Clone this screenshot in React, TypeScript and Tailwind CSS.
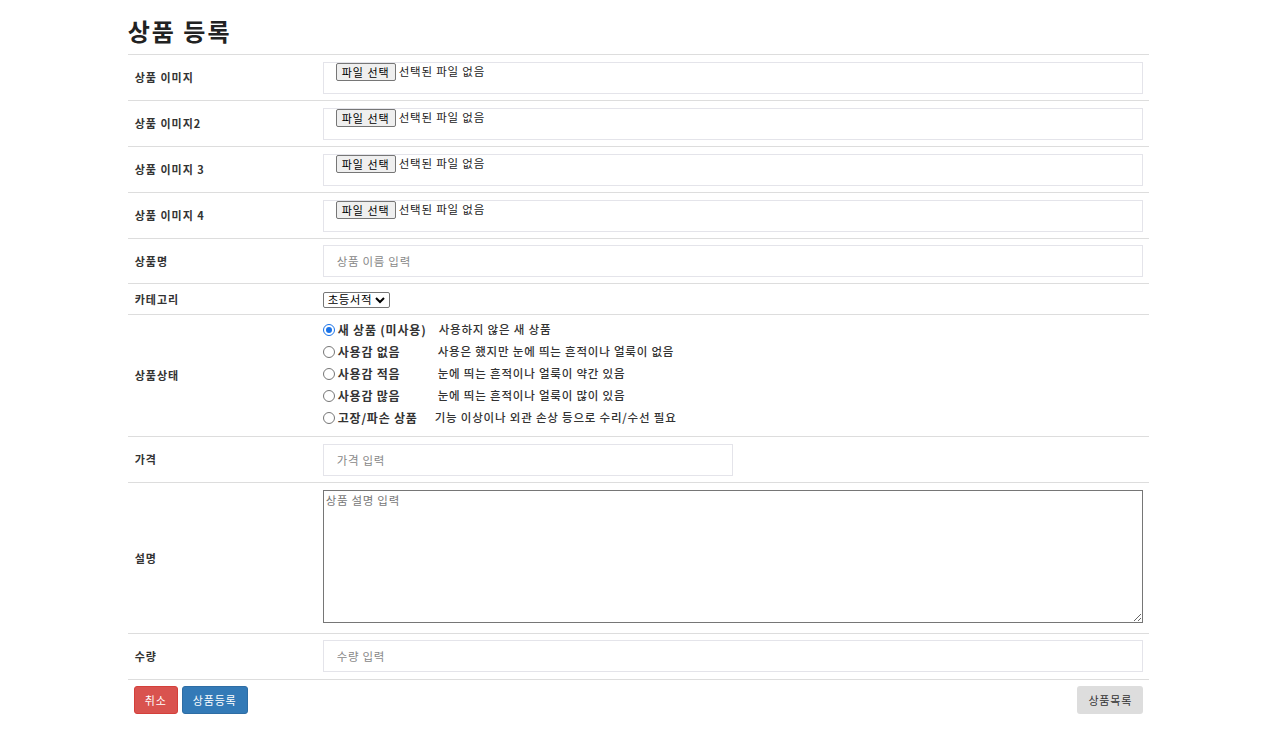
const FONT = { fontFamily: '"Noto Sans CJK KR", "Noto Sans", sans-serif' }

const conditions = [
  { label: '새 상품 (미사용)', desc: '사용하지 않은 새 상품', w: 'w-[101px]', checked: true },
  { label: '사용감 없음', desc: '사용은 했지만 눈에 띄는 흔적이나 얼룩이 없음', w: 'w-[100px]' },
  { label: '사용감 적음', desc: '눈에 띄는 흔적이나 얼룩이 약간 있음', w: 'w-[100px]' },
  { label: '사용감 많음', desc: '눈에 띄는 흔적이나 얼룩이 많이 있음', w: 'w-[100px]' },
  { label: '고장/파손 상품', desc: '기능 이상이나 외관 손상 등으로 수리/수선 필요', w: 'w-[97px]' },
]

function Row({ label, className, children }: { label: string; className: string; children: React.ReactNode }) {
  return (
    <div className="flex border-t border-[#dddddd]">
      <div className="w-[195px] shrink-0 flex items-center pl-[7px] text-[11px] tracking-[1px] font-bold text-[#333]">{label}</div>
      <div className={`flex-1 pr-[6px] ${className}`}>{children}</div>
    </div>
  )
}

function FileBox() {
  return (
    <div className="h-[32px] border border-[#e4e4ea] pl-[12px] flex items-start">
      <span className="h-[18px] px-[5px] flex items-center border border-[#767676] rounded-[2px] bg-[#efefef] text-[11px] tracking-[1px] text-black leading-none">
        파일 선택
      </span>
      <span className="ml-[3px] h-[18px] flex items-center text-[11.5px] tracking-[0.8px] text-[#222]">선택된 파일 없음</span>
    </div>
  )
}

function TextBox({ placeholder, className = '' }: { placeholder: string; className?: string }) {
  return (
    <input
      placeholder={placeholder}
      className={`h-[32px] border border-[#e4e4ea] pl-[13px] text-[11.5px] tracking-[0.7px] text-[#333] placeholder:text-[#888] outline-none block ${className}`}
      style={FONT}
    />
  )
}

function Radio({ checked }: { checked?: boolean }) {
  return checked ? (
    <span className="w-[12px] h-[12px] rounded-full border border-[#1a73e8] bg-white flex items-center justify-center">
      <span className="w-[6px] h-[6px] rounded-full bg-[#1a73e8]" />
    </span>
  ) : (
    <span className="w-[12px] h-[12px] rounded-full border border-[#767676] bg-white" />
  )
}

export default function App() {
  return (
    <div className="min-h-screen bg-white text-[#333]" style={FONT}>
      <div className="w-4/5 mx-auto">
        <h2 className="pt-[15px] pb-[8px] text-[24px] leading-[31px] tracking-[2px] font-bold text-[#222]">상품 등록</h2>

        <Row label="상품 이미지" className="pt-[7px] pb-[6px]"><FileBox /></Row>
        <Row label="상품 이미지2" className="pt-[7px] pb-[6px]"><FileBox /></Row>
        <Row label="상품 이미지 3" className="pt-[7px] pb-[6px]"><FileBox /></Row>
        <Row label="상품 이미지 4" className="pt-[7px] pb-[6px]"><FileBox /></Row>

        <Row label="상품명" className="pt-[6px] pb-[6px]">
          <TextBox placeholder="상품 이름 입력" className="w-full" />
        </Row>

        <Row label="카테고리" className="pt-[8px] pb-[6px]">
          <div className="w-[67px] h-[16px] border border-[#767676] rounded-[2px] flex items-center pl-[4px] gap-[3px] text-[11.5px] tracking-[0.5px] text-black">
            <span className="leading-none">초등서적</span>
            <svg width="10" height="8" viewBox="0 0 10 8">
              <path d="M1 2 L5 6 L9 2" stroke="black" strokeWidth="2" fill="none" />
            </svg>
          </div>
        </Row>

        <Row label="상품상태" className="pt-[4px] pb-[7px]">
          {conditions.map((c) => (
            <div key={c.label} className="h-[22px] flex items-center">
              <Radio checked={c.checked} />
              <span className={`ml-[3px] ${c.w} text-[12px] tracking-[0.8px] font-bold text-[#333]`}>{c.label}</span>
              <span className="text-[11.5px] tracking-[0.8px] font-medium text-[#333]">{c.desc}</span>
            </div>
          ))}
        </Row>

        <Row label="가격" className="pt-[7px] pb-[6px]">
          <TextBox placeholder="가격 입력" className="w-[410px]" />
        </Row>

        <Row label="설명" className="pt-[7px] pb-[10px]">
          <textarea
            placeholder="상품 설명 입력"
            className="block w-full h-[133px] border border-[#767676] px-[2px] py-[1px] text-[11.5px] tracking-[0.7px] placeholder:text-[#777] outline-none"
            style={FONT}
          />
        </Row>

        <Row label="수량" className="pt-[6px] pb-[7px]">
          <TextBox placeholder="수량 입력" className="w-full" />
        </Row>

        <div className="border-t border-[#dddddd] pt-[6px] pl-[6px] pr-[6px] flex items-center">
          <button className="h-[28px] w-[44px] rounded-[3px] border border-[#d43f3a] bg-[#d9534f] text-white text-[11px] tracking-[0.8px]">취소</button>
          <button className="ml-[4px] h-[28px] w-[66px] rounded-[3px] border border-[#2e6da4] bg-[#337ab7] text-white text-[11px] tracking-[0.8px]">상품등록</button>
          <button className="ml-auto h-[28px] w-[66px] rounded-[3px] bg-[#dddddd] text-[#333] text-[11px] tracking-[0.8px]">상품목록</button>
        </div>
      </div>
    </div>
  )
}
